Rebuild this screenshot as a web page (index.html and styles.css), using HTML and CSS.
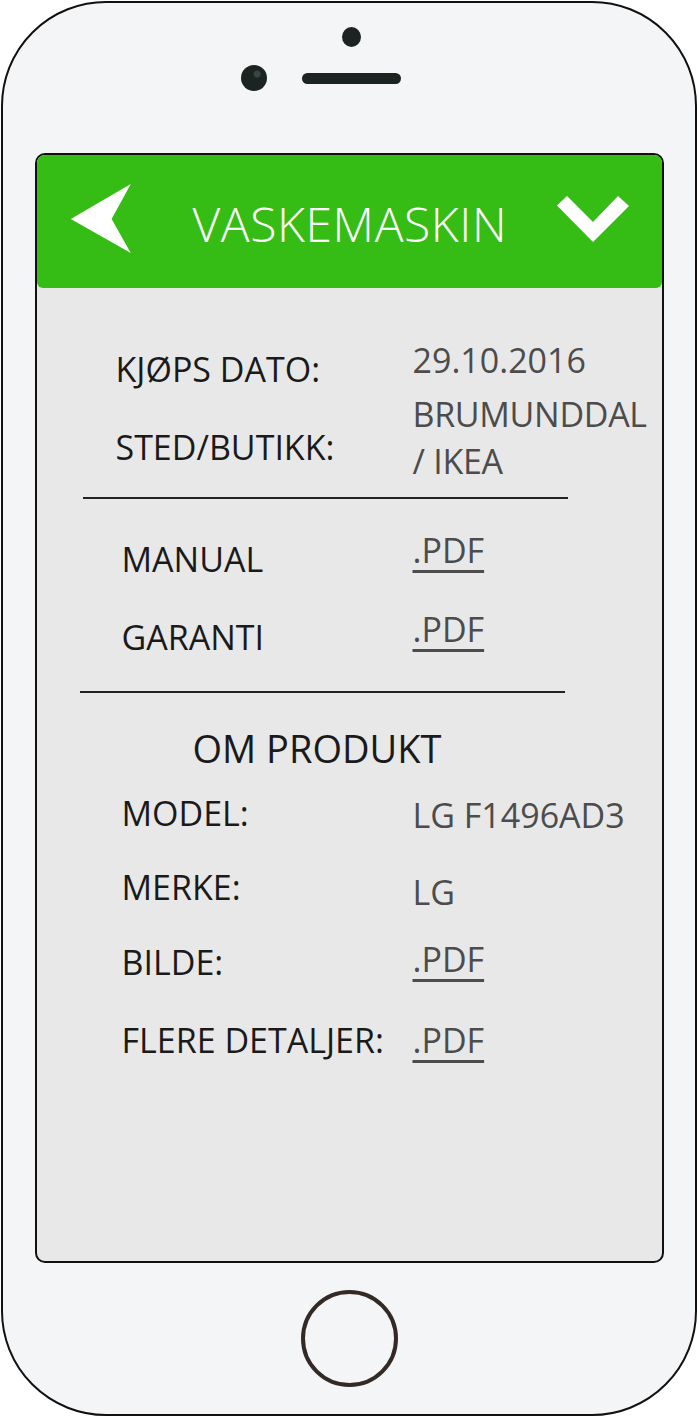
FILE: index.html
```html
<!DOCTYPE html>
<html lang="no">
<head>
<meta charset="utf-8">
<title>Vaskemaskin</title>
<link rel="stylesheet" href="styles.css">
</head>
<body>
<div class="phone">
  <div class="phone-top">
    <span class="sensor"></span>
    <div class="sensor-row">
      <span class="camera"></span>
      <span class="speaker"></span>
      <span class="spacer"></span>
    </div>
  </div>
  <div class="screen">
    <header class="appbar">
      <svg class="back" width="62" height="70" viewBox="0 0 62 70"><polygon points="0.8,35 60.8,0 41.6,35 60.8,69" fill="#fff"/></svg>
      <h1 class="title">VASKEMASKIN</h1>
      <svg class="chev" width="72" height="46" viewBox="0 0 72 46"><polygon points="0,9.5 10,0 36,26 61,0 72,10 36,46" fill="#fff"/></svg>
    </header>

    <section class="info info-purchase">
      <div class="row r-date">
        <span class="label">KJØPS DATO:</span>
        <span class="value">29.10.2016</span>
      </div>
      <div class="row r-store">
        <span class="label">STED/BUTIKK:</span>
        <span class="value value-multi">BRUMUNDDAL<br>/ IKEA</span>
      </div>
    </section>

    <div class="divider d1"></div>

    <section class="info info-files">
      <div class="row r-manual">
        <span class="label">MANUAL</span>
        <span class="value"><span class="pdf">.PDF</span></span>
      </div>
      <div class="row r-garanti">
        <span class="label">GARANTI</span>
        <span class="value"><span class="pdf">.PDF</span></span>
      </div>
    </section>

    <div class="divider d2"></div>

    <section class="info info-product">
      <h2 class="heading">OM PRODUKT</h2>
      <div class="row r-model">
        <span class="label">MODEL:</span>
        <span class="value">LG F1496AD3</span>
      </div>
      <div class="row r-merke">
        <span class="label">MERKE:</span>
        <span class="value">LG</span>
      </div>
      <div class="row r-bilde">
        <span class="label">BILDE:</span>
        <span class="value"><span class="pdf">.PDF</span></span>
      </div>
      <div class="row r-flere">
        <span class="label">FLERE DETALJER:</span>
        <span class="value"><span class="pdf">.PDF</span></span>
      </div>
    </section>
  </div>
  <div class="phone-bottom">
    <span class="home"></span>
  </div>
</div>
</body>
</html>
```

FILE: styles.css
```css
html, body {
  margin: 0;
  padding: 0;
  background: #ffffff;
}

body {
  width: 699px;
  height: 1417px;
  overflow: hidden;
  font-family: "Open Sans", "Noto Sans", sans-serif;
}

.phone {
  box-sizing: border-box;
  width: 696px;
  height: 1415px;
  margin: 1px 0 0 1px;
  border: 2px solid #111111;
  border-radius: 105px;
  background: #f4f5f7;
  display: flex;
  flex-direction: column;
  align-items: center;
}

/* ---------- top hardware ---------- */
.phone-top {
  height: 150px;
  box-sizing: border-box;
  padding-top: 24px;
  padding-left: 5px;
  display: flex;
  flex-direction: column;
  align-items: center;
}

.sensor {
  width: 19px;
  height: 20px;
  border-radius: 50%;
  background: #1b2420;
}

.sensor-row {
  margin-top: 18px;
  display: flex;
  align-items: center;
  gap: 35px;
}

.camera {
  width: 26px;
  height: 26px;
  border-radius: 50%;
  background: radial-gradient(circle at 62% 35%, #3a4541 0 3px, #1b2420 4px);
}

.spacer {
  width: 26px;
  height: 26px;
}

.speaker {
  width: 99px;
  height: 11px;
  border-radius: 6px;
  background: #1b2420;
}

/* ---------- screen ---------- */
.screen {
  box-sizing: border-box;
  width: 629px;
  height: 1110px;
  border: 2px solid #111111;
  border-radius: 10px;
  background: #e8e8e8;
  overflow: hidden;
  display: flex;
  flex-direction: column;
}

.appbar {
  height: 133px;
  flex: none;
  background: #36bd15;
  border-radius: 0 0 6px 6px;
  display: flex;
  align-items: center;
}

.back {
  margin-left: 33px;
  margin-top: -6px;
  flex: none;
}

.title {
  margin: 0 0 0 61px;
  font-family: "Open Sans", "Noto Sans", sans-serif;
  font-weight: 300;
  font-size: 48px;
  line-height: 1;
  color: #ffffff;
  letter-spacing: 0.6px;
  padding-top: 5px;
}

.chev {
  margin-left: auto;
  margin-right: 33px;
  margin-top: -5px;
  flex: none;
}

/* ---------- info rows ---------- */
.info {
  display: flex;
  flex-direction: column;
}

.row {
  display: grid;
  align-items: start;
}

.label,
.value {
  font-size: 34px;
  line-height: 40px;
  white-space: nowrap;
}

.label {
  color: #1a1a1a;
}

.value {
  color: #4c4c4c;
}

.value-multi {
  letter-spacing: -0.3px;
}

.pdf {
  text-decoration: underline;
  text-decoration-thickness: 3px;
  text-underline-offset: 7px;
  text-decoration-color: #4c4c4c;
}

/* purchase section */
.info-purchase {
  margin-top: 52px;
  padding-left: 79px;
}

.info-purchase .row {
  grid-template-columns: 297px auto;
}

.r-date .label { margin-top: 9px; }

.r-store { margin-top: 2px; }
.r-store .label { margin-top: 36px; }
.value-multi { line-height: 47px; }

/* dividers */
.divider {
  height: 2px;
  width: 485px;
  background: #222222;
  flex: none;
}

.d1 {
  margin-top: 12px;
  margin-left: 46px;
}

.d2 {
  margin-top: 34px;
  margin-left: 43px;
}

/* files section */
.info-files {
  margin-top: 31px;
  padding-left: 85px;
}

.info-files .row,
.info-product .row {
  grid-template-columns: 291px auto;
}

.r-manual .label { margin-top: 9px; }

.r-garanti { margin-top: 30px; }
.r-garanti .label { margin-top: 8px; }

/* product section */
.info-product {
  padding-left: 85px;
}

.heading {
  margin: 33px 0 0 71px;
  font-weight: 400;
  font-size: 38px;
  line-height: 44px;
  color: #1a1a1a;
}

.r-model { margin-top: 23px; }
.r-model .value { margin-top: 2px; }

.r-merke { margin-top: 32px; }
.r-merke .value { margin-top: 5px; }

.r-bilde { margin-top: 27px; }
.r-bilde .label { margin-top: 3px; }

.r-flere { margin-top: 38px; }

/* ---------- bottom hardware ---------- */
.phone-bottom {
  padding-top: 27px;
  display: flex;
  justify-content: center;
}

.home {
  box-sizing: border-box;
  width: 97px;
  height: 97px;
  border: 4px solid #332a26;
  border-radius: 50%;
}
```
